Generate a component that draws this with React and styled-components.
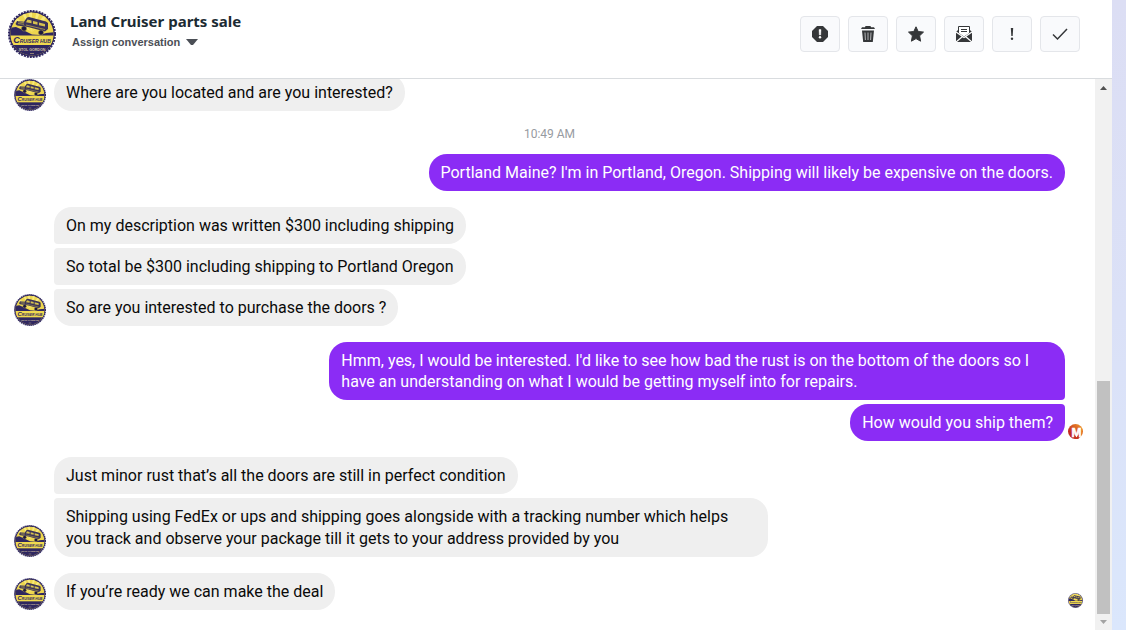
import React, { useId } from "react";
import styled, { createGlobalStyle } from "styled-components";

const GlobalStyle = createGlobalStyle`
  *, *::before, *::after { box-sizing: border-box; }
  body { margin: 0; background: #fff; font-family: Roboto, "Liberation Sans", sans-serif; }
`;

const Page = styled.div`
  display: flex;
  height: 100vh;
  min-height: 320px;
`;

const Conversation = styled.main`
  flex: 1;
  min-width: 0;
  display: flex;
  flex-direction: column;
  background: #fff;
`;

const Backdrop = styled.div`
  width: 14px;
  background: linear-gradient(#dcdef4, #dbe1f7 50%, #dbe7fc);
`;

const Header = styled.header`
  flex: none;
  display: flex;
  align-items: flex-start;
  padding: 10px 32px 20px 8px;
  border-bottom: 1px solid #d9dcdf;
`;

const Heading = styled.div`
  flex: 1;
  min-width: 0;
  padding-left: 14px;
`;

const Title = styled.h1`
  margin: 0;
  font: 700 15px/22px "Noto Sans", sans-serif;
  color: #1c2b33;
`;

const AssignButton = styled.button`
  display: flex;
  align-items: center;
  gap: 6px;
  margin: 0;
  padding: 0 2px;
  border: 0;
  background: none;
  font: bold 11px/20px "Liberation Sans", Arial, sans-serif;
  color: #4b4f56;
`;

const Toolbar = styled.div`
  display: flex;
  gap: 8px;
  padding-top: 6px;
`;

const ToolButton = styled.button`
  display: grid;
  place-items: center;
  width: 40px;
  height: 36px;
  padding: 0;
  border: 1px solid #e4e6ea;
  border-radius: 4px;
  background: #f9fafc;
  color: #353739;
`;

const Body = styled.div`
  flex: 1;
  min-height: 0;
  display: flex;
`;

const Feed = styled.section`
  flex: 1;
  min-width: 0;
  display: flex;
  flex-direction: column;
  justify-content: flex-end;
  overflow: hidden;
  padding: 0 12px 4px 14px;
`;

const Row = styled.div`
  flex: none;
  display: flex;
  align-items: flex-end;
  gap: ${(p) => (p.$sent ? 3 : 8)}px;
  margin-bottom: 16px;
`;

const Stack = styled.div`
  flex: 1;
  min-width: 0;
  display: flex;
  flex-direction: column;
  align-items: ${(p) => (p.$sent ? "flex-end" : "flex-start")};
  gap: 4px;
`;

const joined = (side, first, last) => `
  border-top-${side}-radius: ${first ? 18 : 4}px;
  border-bottom-${side}-radius: ${last ? 18 : 4}px;
`;

const Bubble = styled.p`
  margin: 0;
  max-width: ${(p) => (p.$sent ? "70%" : "71%")};
  padding: ${(p) => (p.$sent ? "8px 12px" : "8px 12px 7px")};
  border-radius: 18px;
  ${(p) => joined(p.$sent ? "right" : "left", p.$first, p.$last)}
  background: ${(p) => (p.$sent ? "#8b2cf5" : "#efefef")};
  color: ${(p) => (p.$sent ? "#fff" : "#0a0a0a")};
  font-size: 16px;
  line-height: ${(p) => (p.$sent ? 21 : 22)}px;
`;

const Time = styled.time`
  flex: none;
  margin-bottom: 13px;
  padding-left: 2px;
  text-align: center;
  font-size: 12px;
  line-height: 14px;
  color: #979ba1;
`;

const Receipt = styled.span`
  flex: none;
  display: flex;
  width: 15px;
  padding-bottom: 2px;
`;

const Scrollbar = styled.div`
  flex: none;
  width: 17px;
  display: flex;
  flex-direction: column;
  background: #f1f1f1;
`;

const ScrollArrow = styled.button`
  height: ${(p) => (p.$dim ? 16 : 17)}px;
  display: grid;
  place-items: center;
  padding: 0;
  border: 0;
  background: none;
  color: ${(p) => (p.$dim ? "#a3a3a3" : "#505050")};
`;

const Track = styled.div`
  flex: 1;
  display: flex;
  flex-direction: column;
  justify-content: flex-end;
  padding: 0 2px;
`;

const Thumb = styled.div`
  height: 45%;
  background: #c1c1c1;
`;

const Svg = styled.svg`
  display: block;
  flex: none;
`;

function ClubLogo({ size }) {
  const id = useId();
  return (
    <Svg width={size} height={size} viewBox="0 0 48 48" role="img" aria-label="Cruiser Hub">
      <defs>
        <clipPath id={id}><circle cx="24" cy="24" r="21.5" /></clipPath>
      </defs>
      <circle cx="24" cy="24" r="22.800" fill="#2f2760" />
      <circle cx="24" cy="24" r="23" fill="none" stroke="#2f2760" strokeWidth="2" strokeDasharray="2 1.01" />
      <g clipPath={`url(#${id})`}>
        <rect width="48" height="48" fill="#edd64e" />
        <path d="M24 22 12 0h4zM24 22 20 0h4zM24 22 29 0h4zM24 22 38 2l3 3zM24 22 3 9l3-4z" fill="#f8e97c" />
        <path d="M0 18l8-1 8 3.500 8 4 8 .5 6-2 10-1v4H0z" fill="#2f2760" />
        <path d="M8 13l1-2 7 .8 3-4.300 2-.5 17 4.500 2 1.500v6l-3 2.500-17-4.500-11-1.500-1.500-1.500z" fill="#3a3258" />
        <path d="M19.500 9.500l4 1v2.800l-5.500-1zM25 11l4.500 1.100v2.700l-4.500-1zM31 12.500l6 1.500v2.500l-6-1.300z" fill="#d5c14f" />
        <path d="M10 13.500l6 .8M18 15l19 4.500M10 11.800l6 1" stroke="#b3a24e" strokeWidth="0.8" />
        <circle cx="16" cy="18.500" r="2.600" fill="#1d183f" stroke="#b3a24e" strokeWidth="0.5" />
        <circle cx="33" cy="22.500" r="2.600" fill="#1d183f" stroke="#b3a24e" strokeWidth="0.5" />
        <path d="M0 25.500h48V35H0z" fill="#f0d94f" />
        <rect y="35" width="48" height="13" fill="#2f2760" />
      </g>
      <text x="24" y="33" textAnchor="middle" fontFamily="Liberation Sans" fontWeight="bold" fontStyle="italic" fontSize="5" fill="#2f2760"><tspan fontSize="9">C</tspan>RUISER HUB</text>
      <text x="24" y="41" textAnchor="middle" fontFamily="Liberation Sans" fontWeight="bold" fontSize="3.600" fill="#d6c6a4">STOL GORDON</text>
      <path d="M22 43.500h4" stroke="#a89880" strokeWidth="0.800" />
    </Svg>
  );
}

function UserLogo() {
  const id = useId();
  return (
    <Svg width="15" height="15" viewBox="0 0 15 15" role="img" aria-label="Seen">
      <defs>
        <linearGradient id={id} x1="0" y1="1" x2="1" y2="0">
          <stop offset="0.3" stopColor="#c22a20" />
          <stop offset="1" stopColor="#f5a52a" />
        </linearGradient>
      </defs>
      <circle cx="7.5" cy="7.5" r="7.5" fill={`url(#${id})`} />
      <text x="8.500" y="13" textAnchor="middle" fontFamily="Liberation Sans" fontWeight="bold" fontSize="12" fill="#fff" stroke="#fff" strokeWidth="0.6">M</text>
      <path d="M6.500 10.500l2 3 2-3v4.500h-4z" fill="#c7321f" />
    </Svg>
  );
}

const TOOLS = [
  ["Report", <><path d="M5 0h6l5 5v6l-5 5H5l-5-5V5z" fill="currentColor" /><path d="M7 3.5h2l-.3 5.5H7.3z" fill="#fff" stroke="#fff" strokeWidth="0.4" /><circle cx="8" cy="11.3" r="1.2" fill="#fff" /></>],
  ["Delete", <><path d="M5.500 0h5l.5 1.200h3L15 3H1l1-1.800h3z" fill="currentColor" /><path d="M2 4.500h12L12.800 16H3.200z" fill="currentColor" /><path d="M5 6.500l.4 7.500M8 6.500V14M11 6.500l-.4 7.500" stroke="#b4b5b8" /></>],
  ["Star", <path d="M8 .8l2.200 4.700 5.300.6-3.900 3.700 1 5.400L8 12.600l-4.600 2.600 1-5.400L.5 6.100l5.300-.6z" fill="currentColor" stroke="currentColor" strokeLinejoin="round" />],
  ["Mark as unread", <><path d="M0 6l2-2v3l6 4 6-4V4l2 2v10H0z" fill="currentColor" /><path d="M2.500.5h11v6.800L8 11 2.500 7.300z" fill="#fff" stroke="currentColor" /><path d="M5 3.500h6M5 5.500h6" stroke="currentColor" /><path d="M0 6l8 5.500L16 6M0 16l6.500-5.500M16 16l-6.500-5.500" fill="none" stroke="#fff" strokeWidth="1.300" /></>],
  ["Follow up", <><path d="M6.800 2h2.400l-.5 8H7.300z" fill="currentColor" /><circle cx="8" cy="12.800" r="1.200" fill="currentColor" /></>],
  ["Done", <path d="M1 8.500l4.500 4.500L15 3" fill="none" stroke="currentColor" strokeWidth="1.500" />],
];

function Group({ sent, lines, avatar, receipt }) {
  return (
    <Row $sent={sent}>
      {avatar && <ClubLogo size={32} />}
      <Stack $sent={sent}>
        {lines.map((text, i) => (
          <Bubble key={text} $sent={sent} $first={i === 0} $last={i === lines.length - 1}>{text}</Bubble>
        ))}
      </Stack>
      <Receipt>{receipt}</Receipt>
    </Row>
  );
}

export default function App() {
  return (
    <Page>
      <GlobalStyle />
      <Conversation>
        <Header>
          <ClubLogo size={48} />
          <Heading>
            <Title>Land Cruiser parts sale</Title>
            <AssignButton type="button">
              Assign conversation
              <Svg width="12" height="6" viewBox="0 0 12 6" aria-hidden="true"><path d="M0 0h12L7 6H5z" fill="currentColor" /></Svg>
            </AssignButton>
          </Heading>
          <Toolbar>
            {TOOLS.map(([label, icon]) => (
              <ToolButton key={label} type="button" aria-label={label}>
                <Svg width="16" height="16" viewBox="0 0 16 16" aria-hidden="true">{icon}</Svg>
              </ToolButton>
            ))}
          </Toolbar>
        </Header>
        <Body>
          <Feed>
            <Group avatar lines={["Where are you located and are you interested?"]} />
            <Time>10:49 AM</Time>
            <Group sent lines={["Portland Maine? I'm in Portland, Oregon. Shipping will likely be expensive on the doors."]} />
            <Group avatar lines={[
              "On my description was written $300 including shipping",
              "So total be $300 including shipping to Portland Oregon",
              "So are you interested to purchase the doors ?",
            ]} />
            <Group sent receipt={<UserLogo />} lines={[
              "Hmm, yes, I would be interested. I'd like to see how bad the rust is on the bottom of the doors so I have an understanding on what I would be getting myself into for repairs.",
              "How would you ship them?",
            ]} />
            <Group avatar lines={[
              "Just minor rust that’s all the doors are still in perfect condition",
              "Shipping using FedEx or ups and shipping goes alongside with a tracking number which helps you track and observe your package till it gets to your address provided by you",
            ]} />
            <Group avatar receipt={<ClubLogo size={15} />} lines={["If you’re ready we can make the deal"]} />
          </Feed>
          <Scrollbar>
            <ScrollArrow type="button" aria-label="Scroll up">
              <Svg width="7" height="4" viewBox="0 0 7 4"><path d="M0 4 3.500 0 7 4z" fill="currentColor" /></Svg>
            </ScrollArrow>
            <Track><Thumb /></Track>
            <ScrollArrow $dim type="button" aria-label="Scroll down">
              <Svg width="7" height="4" viewBox="0 0 7 4"><path d="M0 0h7L3.500 4z" fill="currentColor" /></Svg>
            </ScrollArrow>
          </Scrollbar>
        </Body>
      </Conversation>
      <Backdrop />
    </Page>
  );
}
